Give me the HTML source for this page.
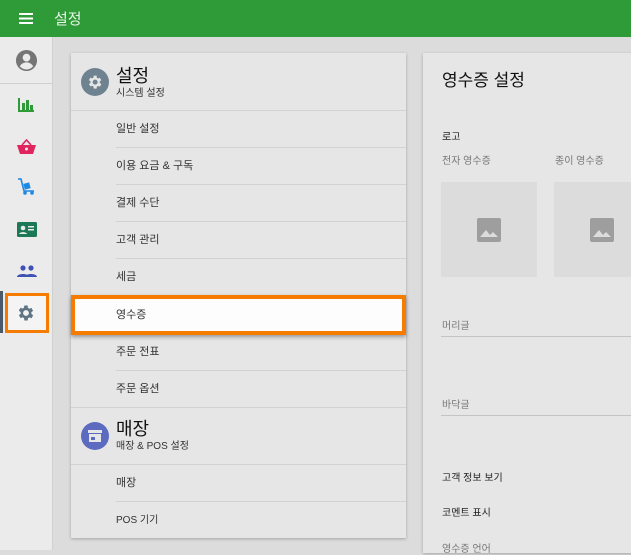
<!DOCTYPE html>
<html><head><meta charset="utf-8"><style>
*{margin:0;padding:0;box-sizing:border-box}
body{width:631px;height:550px;overflow:hidden;background:#dcdcdc;font-family:"Liberation Sans","Noto Sans CJK KR",sans-serif;position:relative;color:#222}
.top{position:absolute;left:0;top:0;width:631px;height:37px;background:#2f9a38;color:#e8f5e9;}
.top .t{position:absolute;left:54px;top:8px;font-size:15px}
.side{position:absolute;left:0;top:37px;width:53px;height:513px;background:#ebebeb;border-right:1px solid #d0d0d0}
.ab{position:absolute}
.card{position:absolute;background:#e6e6e6;box-shadow:0 1px 3px rgba(0,0,0,.25)}
.it{position:absolute;left:45px;font-size:11px;color:#333}
.dv{position:absolute;left:45px;right:0;height:1px;background:#d2d2d2}
.fdv{position:absolute;left:0;right:0;height:1px;background:#d2d2d2}
.lbl{position:absolute;left:19px;font-size:11px}
</style></head><body>
<div class="top">
<svg class="ab" style="left:19px;top:13px" width="14" height="11"><rect y="0" width="14" height="2" fill="#fff"/><rect y="4.5" width="14" height="2" fill="#fff"/><rect y="9" width="14" height="2" fill="#fff"/></svg>
<div class="t">설정</div></div>
<div class="side">
<svg class="ab" style="left:15px;top:12px" width="23" height="23" viewBox="0 0 24 24"><circle cx="12" cy="12" r="11" fill="#757575"/><circle cx="12" cy="9" r="4" fill="#ebebeb"/><path d="M5 18c2-3 4.5-4 7-4s5 1 7 4a9 9 0 0 1-14 0z" fill="#ebebeb"/></svg>
<div class="ab" style="left:0;top:46px;width:53px;height:1px;background:#d0d0d0"></div>
<svg class="ab" style="left:18px;top:61px" width="16" height="14"><rect x="0" y="0" width="2" height="14" fill="#2e9a38"/><rect x="0" y="12" width="16" height="2" fill="#2e9a38"/><rect x="4" y="5" width="3" height="8" fill="#2e9a38"/><rect x="8" y="2" width="3" height="11" fill="#2e9a38"/><rect x="12" y="7" width="3" height="6" fill="#2e9a38"/></svg>
<svg class="ab" style="left:17px;top:102px" width="19" height="15" viewBox="0 0 19 15"><path d="M5 6 L9.5 1 L14 6" stroke="#e0245e" stroke-width="1.6" fill="none"/><path d="M0 6h19l-3 9H3z" fill="#e0245e"/><circle cx="9.5" cy="10" r="1.5" fill="#ebebeb"/></svg>
<svg class="ab" style="left:17px;top:141px" width="19" height="18" viewBox="0 0 19 18"><path d="M1 1h3l3 12h10" stroke="#1e88e5" stroke-width="1.6" fill="none"/><rect x="7" y="5" width="6" height="6" fill="#1e88e5" transform="rotate(-15 10 8)"/><circle cx="8" cy="15" r="1.8" fill="#1e88e5"/><circle cx="15" cy="15" r="1.8" fill="#1e88e5"/></svg>
<svg class="ab" style="left:17px;top:185px" width="20" height="15"><rect width="20" height="15" rx="1.5" fill="#1b7a55"/><circle cx="6" cy="6" r="2.3" fill="#ebebeb"/><path d="M2 12c1-2.5 7-2.5 8 0z" fill="#ebebeb"/><rect x="11" y="4" width="6" height="1.5" fill="#ebebeb"/><rect x="11" y="7" width="6" height="1.5" fill="#ebebeb"/></svg>
<svg class="ab" style="left:17px;top:228px" width="20" height="12"><circle cx="6" cy="3" r="2.6" fill="#3f51b5"/><circle cx="14" cy="3" r="2.6" fill="#3f51b5"/><path d="M0 12c0-4 12-4 12 0zM8 12c0-4 12-4 12 0z" fill="#3f51b5"/></svg>
<div class="ab" style="left:0;top:254px;width:3px;height:42px;background:#4a5a68"></div>
<div class="ab" style="left:5px;top:256px;width:44px;height:40px;border:3px solid #f57c00;background:#f4f4f4"></div>
<svg class="ab" style="left:16px;top:266px" width="20" height="20" viewBox="0 0 24 24"><path fill="#5f7584" d="M19.4 13a7.5 7.5 0 0 0 0-2l2.1-1.6-2-3.5-2.5 1a7 7 0 0 0-1.7-1L15 3h-4l-.4 2.7a7 7 0 0 0-1.7 1l-2.5-1-2 3.5L6.6 11a7.5 7.5 0 0 0 0 2l-2.1 1.6 2 3.5 2.5-1a7 7 0 0 0 1.7 1L11 21h4l.4-2.7a7 7 0 0 0 1.7-1l2.5 1 2-3.5zM13 15.5a3.5 3.5 0 1 1 0-7 3.5 3.5 0 0 1 0 7z" transform="translate(-1 0)"/></svg>
</div>

<div class="card" style="left:71px;top:53px;width:335px;height:485px">
<svg class="ab" style="left:10px;top:15px" width="28" height="28" viewBox="0 0 28 28"><circle cx="14" cy="14" r="14" fill="#6e8290"/><g transform="translate(5.5 5.5) scale(.72)"><path fill="#e6e6e6" d="M19.4 13a7.5 7.5 0 0 0 0-2l2.1-1.6-2-3.5-2.5 1a7 7 0 0 0-1.7-1L15 3h-4l-.4 2.7a7 7 0 0 0-1.7 1l-2.5-1-2 3.5L6.6 11a7.5 7.5 0 0 0 0 2l-2.1 1.6 2 3.5 2.5-1a7 7 0 0 0 1.7 1L11 21h4l.4-2.7a7 7 0 0 0 1.7-1l2.5 1 2-3.5zM13 15.5a3.5 3.5 0 1 1 0-7 3.5 3.5 0 0 1 0 7z" transform="translate(-1 0)"/></g></svg>
<div class="ab" style="left:45px;top:9px;font-size:18px;color:#111">설정</div>
<div class="ab" style="left:45px;top:31px;font-size:10px;color:#333">시스템 설정</div>
<div class="fdv" style="top:57px"></div>
<div class="it" style="top:67px">일반 설정</div><div class="dv" style="top:94px"></div>
<div class="it" style="top:104px">이용 요금 &amp; 구독</div><div class="dv" style="top:131px"></div>
<div class="it" style="top:141px">결제 수단</div><div class="dv" style="top:168px"></div>
<div class="it" style="top:178px">고객 관리</div><div class="dv" style="top:205px"></div>
<div class="it" style="top:215px">세금</div>
<div class="ab" style="left:0;top:242px;width:335px;height:40px;background:#fdfdfd;border:4px solid #f57c00;box-shadow:0 2px 4px rgba(0,0,0,.35)"></div>
<div class="it" style="top:253px">영수증</div>
<div class="it" style="top:290px">주문 전표</div><div class="dv" style="top:317px"></div>
<div class="it" style="top:327px">주문 옵션</div><div class="fdv" style="top:354px"></div>
<svg class="ab" style="left:10px;top:369px" width="28" height="28" viewBox="0 0 28 28"><circle cx="14" cy="14" r="14" fill="#5c6bc0"/><rect x="7" y="8" width="14" height="3" fill="#e6e6e6"/><rect x="8" y="12" width="12" height="8" fill="#e6e6e6"/><rect x="10" y="15" width="4" height="3" fill="#5c6bc0"/></svg>
<div class="ab" style="left:45px;top:362px;font-size:18px;color:#111">매장</div>
<div class="ab" style="left:45px;top:384px;font-size:10px;color:#333">매장 &amp; POS 설정</div>
<div class="fdv" style="top:411px"></div>
<div class="it" style="top:421px">매장</div><div class="dv" style="top:448px"></div>
<div class="it" style="top:458px;font-size:10px">POS 기기</div>
</div>

<div class="card" style="left:423px;top:53px;width:220px;height:500px">
<div class="ab" style="left:19px;top:13px;font-size:17px;color:#111">영수증 설정</div>
<div class="lbl" style="top:75px;font-size:10px">로고</div>
<div class="lbl" style="top:99px;color:#777;font-size:10px">전자 영수증</div>
<div class="ab" style="left:132px;top:99px;color:#777;font-size:10px">종이 영수증</div>
<div class="ab" style="left:18px;top:129px;width:96px;height:95px;background:#dcdcdc"></div>
<div class="ab" style="left:131px;top:129px;width:96px;height:95px;background:#dcdcdc"></div>
<svg class="ab" style="left:54px;top:165px" width="24" height="24"><rect width="24" height="24" rx="2" fill="#9e9e9e"/><path d="M3 19l6-7 4 5 3-3 5 5z" fill="#dcdcdc"/></svg>
<svg class="ab" style="left:167px;top:165px" width="24" height="24"><rect width="24" height="24" rx="2" fill="#9e9e9e"/><path d="M3 19l6-7 4 5 3-3 5 5z" fill="#dcdcdc"/></svg>
<div class="lbl" style="top:264px;color:#777;font-size:10px">머리글</div>
<div class="ab" style="left:18px;top:283px;width:210px;height:1px;background:#c4c4c4"></div>
<div class="lbl" style="top:343px;color:#777;font-size:10px">바닥글</div>
<div class="ab" style="left:18px;top:362px;width:210px;height:1px;background:#c4c4c4"></div>
<div class="lbl" style="top:416px;font-size:10px">고객 정보 보기</div>
<div class="lbl" style="top:451px;font-size:10px">코멘트 표시</div>
<div class="lbl" style="top:487px;color:#777;font-size:10px">영수증 언어</div>
</div>
</body></html>
